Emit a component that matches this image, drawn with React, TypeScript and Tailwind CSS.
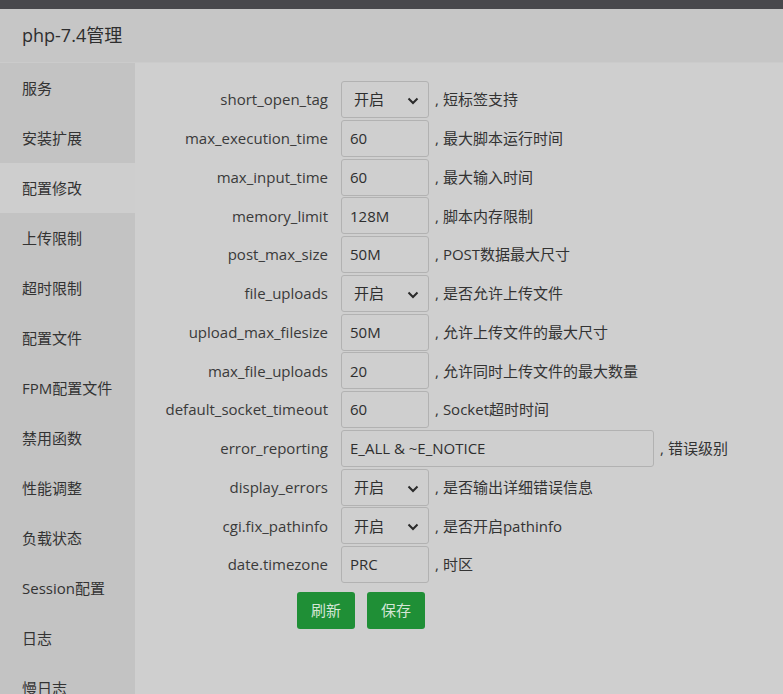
import { ReactNode } from "react";

const menu = ["服务", "安装扩展", "配置修改", "上传限制", "超时限制", "配置文件", "FPM配置文件", "禁用函数", "性能调整", "负载状态", "Session配置", "日志", "慢日志"];

interface Row {
    name: string,
    value: string,
    note: string,
    select?: boolean,
    wide?: boolean
}

const rows: Row[] = [
    { name: "short_open_tag", value: "开启", note: "短标签支持", select: true },
    { name: "max_execution_time", value: "60", note: "最大脚本运行时间" },
    { name: "max_input_time", value: "60", note: "最大输入时间" },
    { name: "memory_limit", value: "128M", note: "脚本内存限制" },
    { name: "post_max_size", value: "50M", note: "POST数据最大尺寸" },
    { name: "file_uploads", value: "开启", note: "是否允许上传文件", select: true },
    { name: "upload_max_filesize", value: "50M", note: "允许上传文件的最大尺寸" },
    { name: "max_file_uploads", value: "20", note: "允许同时上传文件的最大数量" },
    { name: "default_socket_timeout", value: "60", note: "Socket超时时间" },
    { name: "error_reporting", value: "E_ALL & ~E_NOTICE", note: "错误级别", wide: true },
    { name: "display_errors", value: "开启", note: "是否输出详细错误信息", select: true },
    { name: "cgi.fix_pathinfo", value: "开启", note: "是否开启pathinfo", select: true },
    { name: "date.timezone", value: "PRC", note: "时区" },
];

const Chevron = () => (
    <svg width="12" height="8" viewBox="0 0 12 8" className="absolute right-[9px] top-[15px]">
        <path d="M1.5 1.5 L6 6 L10.5 1.5" fill="none" stroke="#2a2a2a" strokeWidth="2" />
    </svg>
);

const Field = ({ row }: { row: Row }): ReactNode => {
    if (row.select) {
        return (
            <div className="relative w-[88px] h-[37px] border border-[#b2b2b2] rounded-[3px] pl-[12px] flex items-center text-[15px] text-[#2e2e2e]">
                {row.value}
                <Chevron />
            </div>
        );
    }
    return (
        <div className={`${row.wide ? "w-[313px]" : "w-[88px]"} h-[37px] border border-[#b2b2b2] rounded-[3px] pl-[8px] flex items-center text-[15px] text-[#2e2e2e]`}>
            {row.value}
        </div>
    );
};

export default function App() {
    return (
        <div className="w-[783px] h-[694px] overflow-hidden flex flex-col bg-[#cfcfcf]" style={{ fontFamily: '"Open Sans", "Noto Sans CJK SC", sans-serif' }}>
            <div className="h-[9px] shrink-0 bg-[#48484c]" />
            <div className="h-[54px] shrink-0 bg-[#c6c6c6] border-b border-[#cbcbcb] flex items-center pl-[22px] text-[18px] text-[#2e2e2e]">
                php-7.4管理
            </div>
            <div className="flex flex-1 min-h-0 overflow-hidden">
                <div className="w-[135px] shrink-0 bg-[#c3c3c3] flex flex-col">
                    {menu.map((item, index) => (
                        <div
                            key={index}
                            className={`h-[50px] shrink-0 flex items-center pl-[22px] text-[15px] text-[#333333] ${index === 2 ? "bg-[#cecece]" : ""}`}
                        >
                            {item}
                        </div>
                    ))}
                </div>
                <div className="flex-1 pt-[18px] flex flex-col">
                    {rows.map((row, index) => (
                        <div key={index} className="h-[38.75px] shrink-0 flex items-start">
                            <div className="w-[206px] pr-[13px] h-[37px] flex items-center justify-end text-[15px] text-[#3a3a3a]">
                                {row.name}
                            </div>
                            <Field row={row} />
                            <div className="h-[37px] flex items-center pl-[6px] text-[15px] text-[#333333]">
                                <span className="mr-[4px]">,</span>{row.note}
                            </div>
                        </div>
                    ))}
                    <div className="flex gap-[12px] ml-[162px] mt-[7px]">
                        <button className="w-[58px] h-[37px] rounded-[3px] bg-[#1f8f36] text-[#d4e6d6] text-[15px]">刷新</button>
                        <button className="w-[58px] h-[37px] rounded-[3px] bg-[#1f8f36] text-[#d4e6d6] text-[15px]">保存</button>
                    </div>
                </div>
            </div>
        </div>
    );
}
